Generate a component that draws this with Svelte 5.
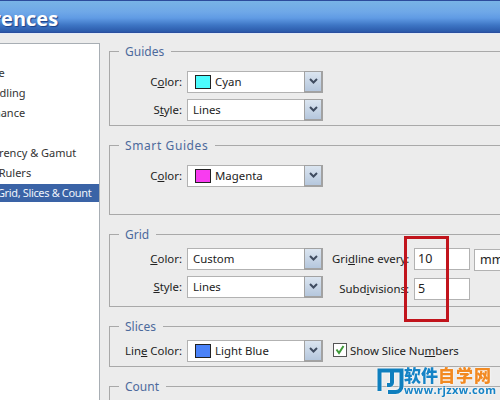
<script>
  const items = ['General','Interface','File Handling','Performance','Cursors','Transparency & Gamut','Units & Rulers','Guides, Grid, Slices & Count'];
</script>

<div class="page">
  <header class="title"><span>Preferences</span></header>
  <div class="main">
    <aside class="list">
      <ul>
        {#each items as it, i}
          <li class:sel={i === items.length - 1}><span>{it}</span></li>
        {/each}
      </ul>
    </aside>
    <section class="content">
      <fieldset class="guides">
        <legend>Guides</legend>
        <div class="rows">
          <div class="row"><label>C<u>o</u>lor:</label><div class="select"><i class="sw cyan"></i><span>Cyan</span><b class="btn"><svg viewBox="0 0 9 6"><path d="M1 1l3.500 3.500L8 1"/></svg></b></div></div>
          <div class="row"><label>S<u>t</u>yle:</label><div class="select"><span>Lines</span><b class="btn"><svg viewBox="0 0 9 6"><path d="M1 1l3.500 3.500L8 1"/></svg></b></div></div>
        </div>
      </fieldset>
      <fieldset class="smart">
        <legend>Smart Guides</legend>
        <div class="row"><label>C<u>o</u>lor:</label><div class="select"><i class="sw magenta"></i><span>Magenta</span><b class="btn"><svg viewBox="0 0 9 6"><path d="M1 1l3.500 3.500L8 1"/></svg></b></div></div>
      </fieldset>
      <fieldset class="grid">
        <legend>Grid</legend>
        <div class="gridbody">
          <div class="rows">
            <div class="row"><label><u>C</u>olor:</label><div class="select"><span>Custom</span><b class="btn"><svg viewBox="0 0 9 6"><path d="M1 1l3.500 3.500L8 1"/></svg></b></div></div>
            <div class="row"><label><u>S</u>tyle:</label><div class="select"><span>Lines</span><b class="btn"><svg viewBox="0 0 9 6"><path d="M1 1l3.500 3.500L8 1"/></svg></b></div></div>
          </div>
          <div class="nums">
            <div class="num"><label>Gri<u>d</u>line every:</label><div class="input">10</div><div class="input unit">mm</div></div>
            <div class="num"><label>Subd<u>i</u>visions:</label><div class="input">5</div></div>
          </div>
        </div>
      </fieldset>
      <fieldset class="slices">
        <legend>Slices</legend>
        <div class="row">
          <label>Lin<u>e</u> Color:</label><div class="select"><i class="sw blue"></i><span>Light Blue</span><b class="btn"><svg viewBox="0 0 9 6"><path d="M1 1l3.500 3.500L8 1"/></svg></b></div>
          <div class="check"><i class="box"><svg viewBox="0 0 12 12"><path d="M2.500 5.500l2.500 3.500 4.500-7"/></svg></i><span>Show Slice N<span>u</span><u>m</u>bers</span></div>
        </div>
      </fieldset>
      <fieldset class="count"><legend>Count</legend></fieldset>
    </section>
  </div>
  <div class="redbox"></div>
  <div class="mark">
    <svg class="logo" viewBox="0 0 27 26"><path d="M2.500 23V2.500H24.500V18a6 6 0 0 1-6 6H11" fill="none" stroke="#0f7fbe" stroke-width="4"/><path d="M15 3V14.500a2.500 2.500 0 0 1-2.500 2.500H10" fill="none" stroke="#0f7fbe" stroke-width="4"/></svg>
    <div class="marktext">
      <div class="cn"><span class="bl">软件</span><span class="or">自学网</span></div>
      <div class="url">www.rjzxw.com</div>
    </div>
  </div>
</div>

<style>
  :global(body) { margin: 0; }
  .page {
    position: relative;
    width: 500px;
    height: 400px;
    overflow: hidden;
    background: #ececec;
    font: 11.400px "Noto Sans", Tahoma, sans-serif;
    color: #222;
  }
  .title {
    height: 33px;
    box-sizing: border-box;
    border-top: 1px solid #2c4c9c;
    border-bottom: 1px solid #2a4f9f;
    background: linear-gradient(#78b4e6 0, #6fa8e8 35%, #609be4 55%, #3d75c4 78%, #2a58a8 100%);
    box-shadow: 0 1px 0 #e3ebf7;
    overflow: hidden;
    white-space: nowrap;
  }
  .title span {
    display: block;
    margin-left: -61px;
    font: bold 20px/36px "Open Sans", sans-serif;
    color: #fff;
    text-shadow: 1px 1px 1px #1c3f86;
  }
  .main {
    display: flex;
    padding-top: 10px;
    height: 357px;
    align-items: stretch;
  }
  .list {
    width: 100px;
    height: 100%;
    flex: none;
    box-sizing: border-box;
    background: #fff;
    border: 1px solid #a8aeb4;
    border-left: 0;
    border-bottom: 0;
    overflow: hidden;
  }
  ul {
    margin: 0;
    padding: 0;
    list-style: none;
    display: flex;
    flex-direction: column;
    gap: 2px;
  }
  li {
    height: 18px;
    line-height: 18px;
    white-space: nowrap;
    color: #333;
    font-size: 11px;
  }
  li span { margin-left: -42px; display: block; }
  li.sel { background: #3a63a6; color: #eef3fb; letter-spacing: -.35px; }
  .content {
    flex: 1;
    padding-left: 9px;
    margin-right: -10px;
    min-width: 0;
  }
  fieldset {
    margin: 0 0 11px;
    border: 1px solid #a9a9a9;
    border-right: 0;
    padding: 0;
    min-width: 0;
  }
  legend {
    margin-left: 9px;
    padding: 1px 7px 0 6px;
    font: 12px/15px "Noto Sans", Tahoma, sans-serif;
    color: #4c6a9c;
  }
  .smart legend { letter-spacing: .6px; }
  .guides { padding: 12px 0 4px; }
  .smart { padding: 12px 0 27px; }
  .grid { padding: 6px 0 8px; }
  .slices { padding: 6px 0 4px; }
  .count { height: 60px; }
  .rows { display: flex; flex-direction: column; gap: 6px; }
  .row { display: flex; align-items: center; height: 22px; }
  .row label {
    width: 72px;
    flex: none;
    text-align: right;
    margin-right: 5px;
    padding-bottom: 2px;
    white-space: nowrap;
  }
  .select {
    position: relative;
    width: 136px;
    height: 22px;
    box-sizing: border-box;
    flex: none;
    display: flex;
    align-items: center;
    gap: 4px;
    padding-left: 5px;
    padding-right: 20px;
    background: #fff;
    border: 1px solid #b2b2b2;
    color: #222;
  }
  .select span { padding-bottom: 2px; }
  .sw {
    width: 16px;
    height: 14px;
    box-sizing: border-box;
    border: 1px solid #222;
    margin-left: 2px;
    flex: none;
  }
  .cyan { background: #4dfbfd; }
  .magenta { background: #f83cf0; }
  .blue { background: #4a82f8; }
  .btn {
    position: absolute;
    right: -1px;
    top: -1px;
    bottom: -1px;
    width: 19px;
    box-sizing: border-box;
    border: 1px solid #a2a2a2;
    border-width: 1px 2px 2px 1px;
    background: linear-gradient(#dbe5f0, #b5c7dd);
    display: flex;
    align-items: center;
    justify-content: center;
  }
  .btn svg { width: 9px; height: 6px; margin-top: -2px; }
  .btn path { fill: none; stroke: #3f4c60; stroke-width: 2; }
  .gridbody { display: flex; }
  .nums { display: flex; flex-direction: column; gap: 8px; margin: 0 0 -2px 9px; }
  .num { display: flex; align-items: center; height: 22px; }
  .num label { width: 77px; text-align: right; margin-right: 5px; padding-bottom: 2px; white-space: nowrap; }
  .input {
    width: 56px;
    height: 22px;
    box-sizing: border-box;
    background: #fff;
    border: 1px solid #b2b2b2;
    line-height: 20px;
    padding-left: 3px;
    font-size: 12.500px;
    flex: none;
  }
  .unit { margin-left: 4px; margin-top: 1px; width: 40px; padding-left: 5px; }
  .check { display: flex; align-items: center; gap: 3px; margin-left: 10px; white-space: nowrap; margin-top: -2px; }
  .box {
    width: 12px; height: 12px;
    background: #fff;
    border: 1px solid #555;
    display: block;
    flex: none;
  }
  .box svg { display: block; width: 12px; height: 12px; }
  .box path { fill: none; stroke: #3f9a3a; stroke-width: 2; }
  .redbox {
    position: absolute;
    left: 404px;
    top: 236px;
    width: 45px;
    height: 86px;
    box-sizing: border-box;
    border: 3px solid #c1141c;
  }
  .mark {
    position: absolute;
    left: 377px;
    top: 366px;
    display: flex;
    gap: 0;
    filter: drop-shadow(0 0 1px #fff);
  }
  .logo { width: 27px; height: 26px; flex: none; margin-top: 2px; }
  .marktext { width: 92px; }
  .cn { font: 900 17px/18px "Noto Sans CJK SC", sans-serif; white-space: nowrap; }
  .bl { color: #1583c6; }
  .or { color: #f28a22; letter-spacing: 1px; }
  .url { font: bold 11px/11px "Open Sans", sans-serif; color: #1583c6; letter-spacing: .4px; white-space: nowrap; }
</style>
